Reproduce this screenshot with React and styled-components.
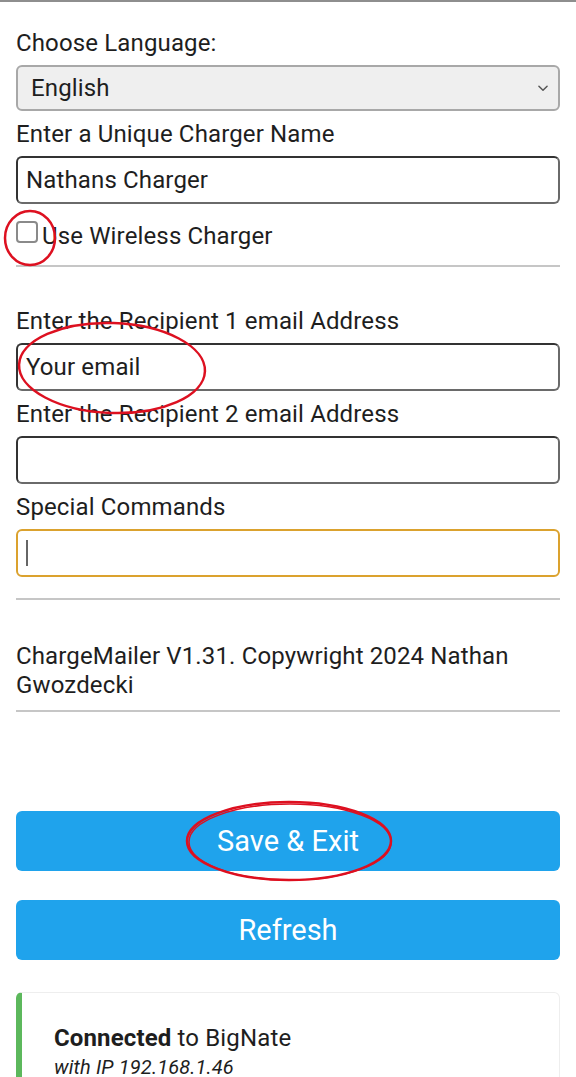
import React from 'react'
import styled, { createGlobalStyle } from 'styled-components'

const GlobalStyle = createGlobalStyle`
  html, body {
    margin: 0;
    padding: 0;
    background: #ffffff;
  }
  body {
    font-family: Roboto, "Noto Sans", sans-serif;
    color: #1e1e1e;
    letter-spacing: 0.14px;
  }
  * {
    box-sizing: border-box;
  }
`

const Page = styled.div`
  position: relative;
  width: 576px;
  min-height: 1077px;
  border-top: 2px solid #8e8e8e;
  padding: 0 16px;
  overflow: hidden;
`

const Label = styled.label`
  display: block;
  font-size: 24px;
  line-height: 26px;
  margin-bottom: 9px;
  margin-top: ${p => p.$top || '10px'};
`

const Select = styled.div`
  display: flex;
  align-items: center;
  justify-content: space-between;
  height: 46px;
  padding: 0 8px 0 13px;
  background: #efefef;
  border: 2px solid #a8a8a8;
  border-radius: 6px;
  font-size: 24px;

  svg {
    width: 14px;
    height: 14px;
    color: #555;
  }
`

const InputWrap = styled.div`
  position: relative;
`

const Input = styled.input`
  display: block;
  width: 100%;
  height: 48px;
  padding: 0 8px;
  border: 2px solid ${p => p.$focused ? '#dba22e' : '#333333'};
  border-right-color: ${p => p.$focused ? '#dba22e' : '#6a6a6a'};
  border-bottom-color: ${p => p.$focused ? '#dba22e' : '#6a6a6a'};
  border-radius: 6px;
  background: #ffffff;
  font-family: Roboto, sans-serif;
  font-size: 24px;
  letter-spacing: 0.14px;
  color: #1e1e1e;
  outline: none;

  &::placeholder {
    color: #1e1e1e;
  }
`

const Caret = styled.span`
  position: absolute;
  left: 10px;
  top: 11px;
  width: 2px;
  height: 26px;
  background: #666;
`

const CheckRow = styled.label`
  display: flex;
  align-items: flex-start;
  gap: 4px;
  margin-top: 19px;
  font-size: 24px;
  line-height: 26px;
`

const Box = styled.span`
  flex: none;
  width: 22px;
  height: 22px;
  margin-top: -2px;
  border: 2px solid #8a8a8a;
  border-radius: 4px;
  background: #fff;
`

const Rule = styled.hr`
  margin: ${p => p.$m || '16px 0 0'};
  border: none;
  border-top: 2px solid #c6c6c6;
  height: 0;
`

const Footer = styled.p`
  margin: 42px 0 10px;
  font-size: 24px;
  line-height: 29px;
`

const Button = styled.button`
  display: block;
  width: 100%;
  height: 60px;
  margin-top: ${p => p.$top};
  border: none;
  border-radius: 6px;
  background: #1fa3ec;
  color: #ffffff;
  font-family: Roboto, sans-serif;
  font-size: 29px;
  cursor: pointer;
`

const Msg = styled.div`
  margin-top: 32px;
  padding: 31px 20px 40px 32px;
  border: 1px solid #eeeeee;
  border-left: 6px solid #5cb85c;
  border-radius: 6px;
  font-size: 24px;
  line-height: 29px;

  strong {
    font-weight: 700;
  }

  em {
    display: block;
    font-size: 20px;
  }
`

const Marks = styled.svg`
  position: absolute;
  top: 0;
  left: 0;
  pointer-events: none;
`

const Chevron = () => (
  <svg viewBox="0 0 24 24" fill="none" stroke="currentColor" strokeWidth="2.5" strokeLinecap="round" strokeLinejoin="round">
    <path d="M5 9l7 7 7-7" />
  </svg>
)

export default function App() {
  return (
    <Page>
      <GlobalStyle />
      <Label $top="28px">Choose Language:</Label>
      <Select>
        <span>English</span>
        <Chevron />
      </Select>

      <Label>Enter a Unique Charger Name</Label>
      <Input defaultValue="Nathans Charger" />

      <CheckRow>
        <Box />
        <span>Use Wireless Charger</span>
      </CheckRow>
      <Rule />

      <Label $top="41px">Enter the Recipient 1 email Address</Label>
      <Input placeholder="Your email" />
      <Label>Enter the Recipient 2 email Address</Label>
      <Input />
      <Label>Special Commands</Label>
      <InputWrap>
        <Input $focused />
        <Caret />
      </InputWrap>
      <Rule $m="21px 0 0" />

      <Footer>ChargeMailer V1.31. Copywright 2024 Nathan Gwozdecki</Footer>
      <Rule $m="0" />

      <Button $top="99px">Save &amp; Exit</Button>
      <Button $top="29px">Refresh</Button>

      <Msg>
        <strong>Connected</strong> to BigNate
        <em>with IP 192.168.1.46</em>
      </Msg>

      <Marks width="576" height="1077">
        <g fill="none" stroke="#dd1020" strokeWidth="2.5">
          <ellipse cx="30" cy="236" rx="25" ry="27" />
          <ellipse cx="112" cy="366" rx="93" ry="45" transform="rotate(2 112 366)" />
          <ellipse cx="289" cy="839" rx="102" ry="39" />
          <ellipse cx="290" cy="840" rx="101" ry="38" strokeWidth="1.5" />
        </g>
      </Marks>
    </Page>
  )
}
